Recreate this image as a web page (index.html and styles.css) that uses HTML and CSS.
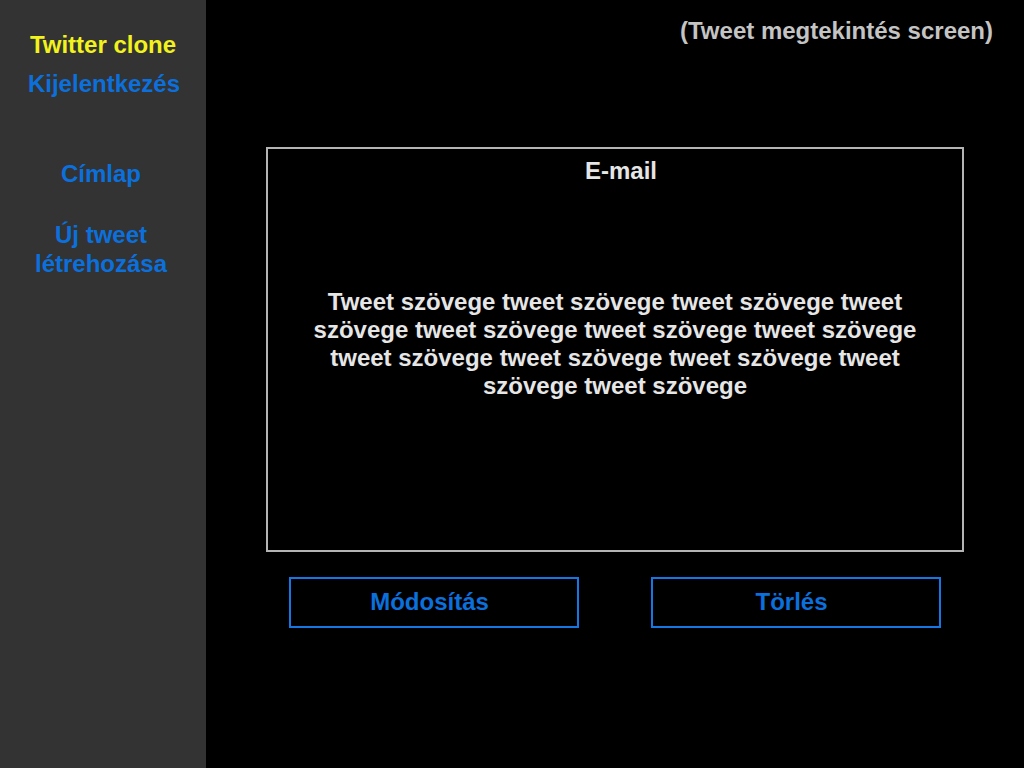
FILE: index.html
```html
<!DOCTYPE html>
<html lang="hu">
<head>
<meta charset="utf-8">
<title>Tweet megtekintés</title>
<link rel="stylesheet" href="styles.css">
</head>
<body>
<div class="app">
  <aside class="sidebar">
    <div class="brand">Twitter clone</div>
    <a class="logout" href="#">Kijelentkezés</a>
    <nav class="nav">
      <a class="nav-item" href="#">Címlap</a>
      <a class="nav-item" href="#">Új tweet<br>létrehozása</a>
    </nav>
  </aside>
  <main class="main">
    <div class="screen-title">(Tweet megtekintés screen)</div>
    <section class="tweet-box">
      <div class="tweet-author">E-mail</div>
      <p class="tweet-text">Tweet szövege tweet szövege tweet szövege tweet szövege tweet szövege tweet szövege tweet szövege tweet szövege tweet szövege tweet szövege tweet szövege tweet szövege</p>
    </section>
    <div class="actions">
      <button class="btn">Módosítás</button>
      <button class="btn">Törlés</button>
    </div>
  </main>
</div>
</body>
</html>
```

FILE: styles.css
```css
* { box-sizing: border-box; }
html, body { margin: 0; padding: 0; height: 100%; }
body {
  background: #000;
  font-family: "Liberation Sans", Arial, sans-serif;
  font-weight: bold;
  font-size: 24px;
  line-height: 28px;
}
.app {
  display: flex;
  height: 768px;
}
.sidebar {
  width: 206px;
  flex: none;
  background: #333333;
  display: flex;
  flex-direction: column;
  align-items: center;
  padding-top: 31px;
}
.brand { color: #f2f21c; }
.logout {
  color: #0b70dc;
  text-decoration: none;
  margin-top: 11px;
  padding-left: 2px;
}
.nav {
  display: flex;
  flex-direction: column;
  align-items: center;
  margin-top: 61px;
  padding-right: 4px;
  gap: 32px;
}
.nav-item {
  color: #0b70dc;
  text-decoration: none;
  text-align: center;
  line-height: 29px;
}
.main {
  flex: 1;
  padding: 17px 60px 0 60px;
  display: flex;
  flex-direction: column;
}
.screen-title {
  color: #c4c4c4;
  text-align: right;
  margin-right: -29px;
}
.tweet-box {
  margin-top: 102px;
  height: 405px;
  border: 2px solid #b4b4b4;
  padding: 8px 40px 0 40px;
  text-align: center;
}
.tweet-author {
  color: #e6e6e6;
  padding-left: 12px;
}
.tweet-text {
  color: #e6e6e6;
  margin: 103px 0 0 0;
}
.actions {
  display: flex;
  justify-content: space-between;
  padding: 0 23px;
  margin-top: 25px;
}
.btn {
  width: 290px;
  height: 51px;
  background: #000;
  border: 2px solid #1576e4;
  color: #0b70dc;
  font: inherit;
  padding: 0 9px 1px 0;
  cursor: pointer;
}
```
